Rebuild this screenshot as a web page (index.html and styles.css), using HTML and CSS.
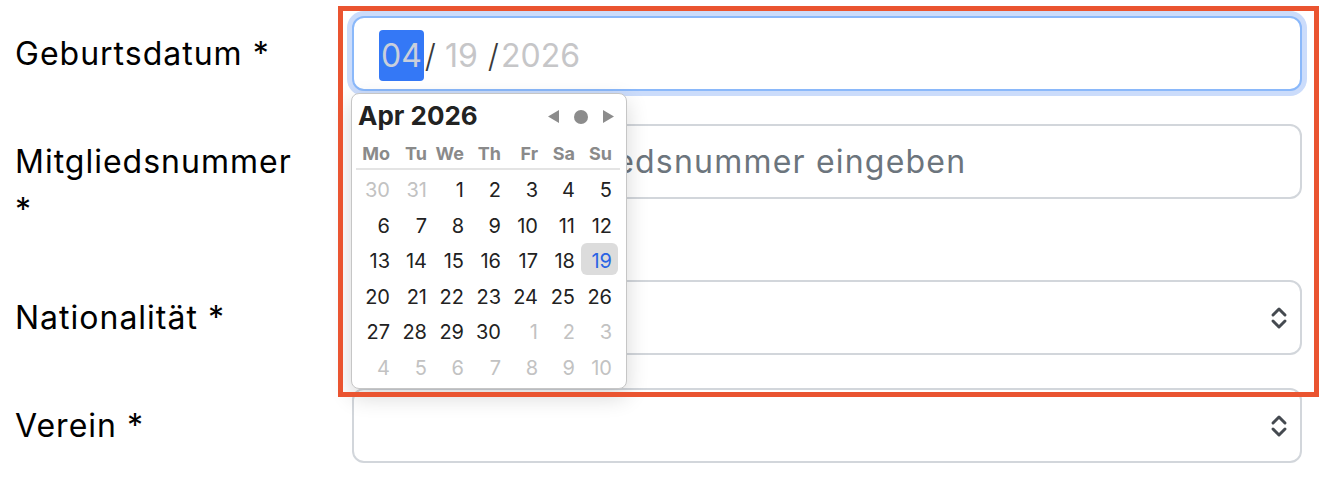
FILE: index.html
```html
<!DOCTYPE html>
<html lang="de">

<head>
    <meta charset="UTF-8">
    <meta name="viewport" content="width=device-width, initial-scale=1.0">
    <title>Anmeldung</title>
    <link rel="stylesheet" href="styles.css">
</head>

<body>
    <form class="form">
        <div class="row">
            <label class="label">Geburtsdatum *</label>
            <div class="field">
                <div class="control date focus">
                    <span class="seg seg-active">04</span><span class="sep">/</span>&nbsp;<span class="seg">19</span>&nbsp;<span class="sep sep-gap">/</span><span class="seg">2026</span>
                </div>

                <!-- Kalender-Popup -->
                <div class="picker">
                    <div class="picker-head">
                        <span class="picker-title">Apr 2026</span>
                        <div class="picker-nav">
                            <svg width="12" height="13" viewBox="0 0 12 13"><polygon points="12,0 12,13 1,6.5" /></svg>
                            <svg width="14" height="14" viewBox="0 0 14 14"><circle cx="7" cy="7" r="7" /></svg>
                            <svg width="12" height="13" viewBox="0 0 12 13"><polygon points="0,0 0,13 11,6.5" /></svg>
                        </div>
                    </div>
                    <div class="weekdays">
                        <span>Mo</span><span>Tu</span><span>We</span><span>Th</span><span>Fr</span><span>Sa</span><span>Su</span>
                    </div>
                    <div class="days">
                        <span class="muted">30</span><span class="muted">31</span><span>1</span><span>2</span><span>3</span><span>4</span><span>5</span>
                        <span>6</span><span>7</span><span>8</span><span>9</span><span>10</span><span>11</span><span>12</span>
                        <span>13</span><span>14</span><span>15</span><span>16</span><span>17</span><span>18</span><span class="today">19</span>
                        <span>20</span><span>21</span><span>22</span><span>23</span><span>24</span><span>25</span><span>26</span>
                        <span>27</span><span>28</span><span>29</span><span>30</span><span class="muted">1</span><span class="muted">2</span><span class="muted">3</span>
                        <span class="muted">4</span><span class="muted">5</span><span class="muted">6</span><span class="muted">7</span><span class="muted">8</span><span class="muted">9</span><span class="muted">10</span>
                    </div>
                </div>
            </div>
        </div>

        <div class="row">
            <label class="label">Mitgliedsnummer *</label>
            <div class="field">
                <input class="control text" type="text" placeholder="Bitte Ihre Mitgliedsnummer eingeben">
            </div>
        </div>

        <div class="row">
            <label class="label">Nationalität *</label>
            <div class="field">
                <div class="control select">
                    <svg class="chevrons" width="18" height="26" viewBox="0 0 18 26"><path d="M3 10 L9 4 L15 10 M3 16 L9 22 L15 16" /></svg>
                </div>
            </div>
        </div>

        <div class="row">
            <label class="label">Verein *</label>
            <div class="field">
                <div class="control select">
                    <svg class="chevrons" width="18" height="26" viewBox="0 0 18 26"><path d="M3 10 L9 4 L15 10 M3 16 L9 22 L15 16" /></svg>
                </div>
            </div>
        </div>
    </form>

    <!-- Markierung -->
    <div class="mark"></div>
</body>

</html>
```

FILE: styles.css
```css
body {
    margin: 0;
    background: #fff;
    color: #000;
    font-family: 'Inter', 'Liberation Sans', sans-serif;
}

/* Formular */
.form {
    padding: 16px 38px 0 15px;
}

.row {
    display: grid;
    grid-template-columns: 292px 1fr;
    column-gap: 45px;
    margin-bottom: 32px;
}

.label {
    padding: 14px 0;
    font-size: 32px;
    line-height: 48px;
    letter-spacing: 1px;
}

.field {
    position: relative;
}

.control {
    display: flex;
    align-items: center;
    width: 100%;
    height: 75px;
    box-sizing: border-box;
    padding: 0 24px;
    border: 2px solid #d2d6db;
    border-radius: 12px;
    background: #fff;
    font-family: 'Inter', 'Liberation Sans', sans-serif;
    font-size: 32px;
    color: #212529;
    outline: none;
}

.control::placeholder {
    color: #6c757d;
}

.control.text {
    padding-left: 16px;
    letter-spacing: 1.2px;
}

.control.focus {
    border-color: #8ab8fa;
    box-shadow: 0 0 0 5px #cbdcfb;
}

/* Datumsfeld */
.date {
    padding-left: 25px;
    padding-top: 4px;
}

.seg {
    color: #c6c6c8;
}

.seg-active {
    height: 51px;
    line-height: 51px;
    padding: 0 2px;
    border-radius: 4px;
    background: #3478f6;
    color: #c9cfdb;
}

.sep {
    color: #3a3a3a;
    font-weight: 300;
    margin-left: 1px;
}

.sep-gap {
    margin-right: 2px;
}

/* Select */
.select {
    justify-content: flex-end;
    padding-right: 12px;
}

.chevrons path {
    fill: none;
    stroke: #454a50;
    stroke-width: 3;
    stroke-linecap: round;
    stroke-linejoin: round;
}

/* Kalender */
.picker {
    position: absolute;
    left: -1px;
    top: 77px;
    z-index: 5;
    width: 276px;
    height: 296px;
    box-sizing: border-box;
    padding: 3px 8px 6px 7px;
    border: 1px solid #c6c6c6;
    border-radius: 8px;
    background: #fff;
    box-shadow: 0 8px 22px rgba(0, 0, 0, 0.16);
    font-family: 'Inter', 'Liberation Sans', sans-serif;
}

.picker-head {
    display: flex;
    justify-content: space-between;
    align-items: center;
    height: 36px;
}

.picker-title {
    font-size: 26px;
    font-weight: 700;
    color: #222;
    margin-left: -1px;
}

.picker-nav {
    display: flex;
    align-items: center;
    gap: 15px;
    margin-right: 3px;
    margin-top: 3px;
    fill: #8c8c8c;
}

.weekdays,
.days {
    display: grid;
    grid-template-columns: repeat(7, 37px);
}

.weekdays {
    margin: 7px -2px 0 -3px;
    padding: 0 2px 0 3px;
    border-bottom: 2px solid #e4e4e4;
    font-size: 18px;
    font-weight: 700;
    line-height: 28px;
    color: #8a8a8a;
}

.weekdays span,
.days span {
    text-align: right;
    padding-right: 6px;
}

.days {
    margin-top: 2px;
    grid-auto-rows: 32px;
    row-gap: 3.6px;
    font-size: 20px;
    line-height: 36px;
    color: #222;
}

.days .muted {
    color: #c2c2c2;
}

.days .today {
    border-radius: 6px;
    background: #dcdcdc;
    color: #2a64e4;
}

/* Rote Markierung */
.mark {
    position: absolute;
    left: 338px;
    top: 6px;
    width: 981px;
    height: 391px;
    box-sizing: border-box;
    border: 5px solid #ea5430;
    pointer-events: none;
    z-index: 10;
}
```
